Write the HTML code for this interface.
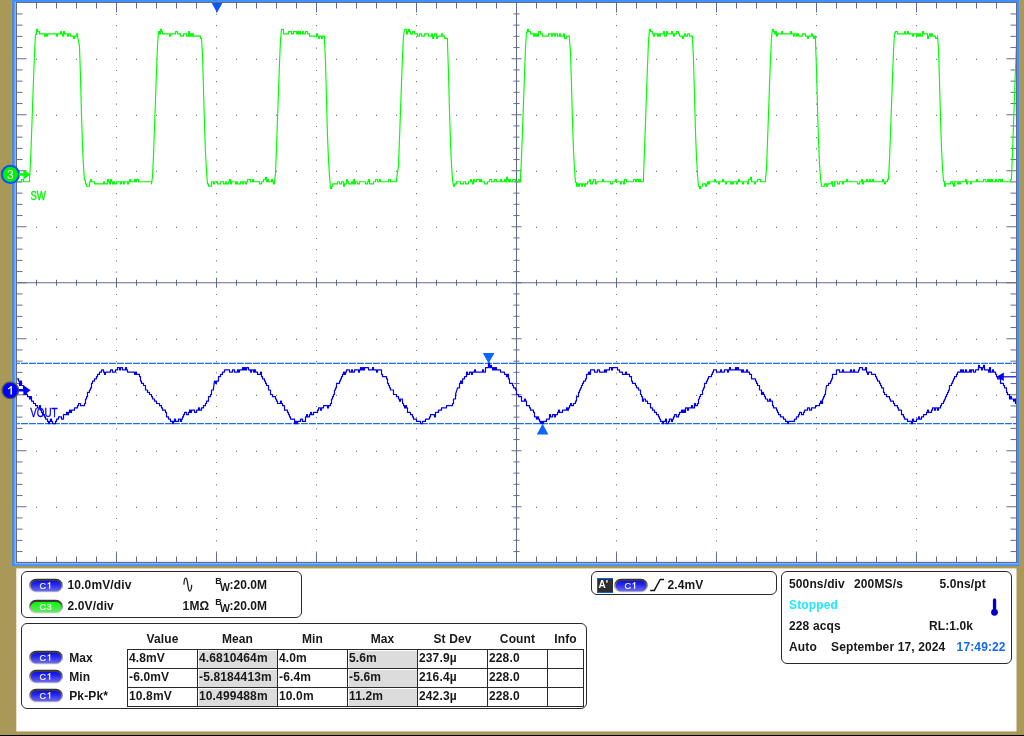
<!DOCTYPE html>
<html><head><meta charset="utf-8"><title>Oscilloscope</title>
<style>
html,body{margin:0;padding:0}
body{width:1024px;height:736px;overflow:hidden;position:relative;background:#aa9858;font-family:"Liberation Sans",sans-serif;}
#bottomline{position:absolute;left:0;top:735px;width:1024px;height:1px;background:#000;}
.box{position:absolute;border:1px solid #2a2a2a;border-radius:6px;box-sizing:border-box;background:#fff}
.t{position:absolute;font-weight:bold;font-size:12px;line-height:14px;color:#181818;white-space:nowrap;letter-spacing:0.13px}
.cell{position:absolute;box-sizing:border-box;border:1px solid #2a2a2a;height:20px}
.g{background:#dcdcdc;box-shadow:inset 1px 1px 0 #fff}
</style></head>
<body>
<svg width="1024" height="568" viewBox="0 0 1024 568" style="position:absolute;left:0;top:0;will-change:transform">
<defs><clipPath id="cp"><rect x="17" y="3" width="999" height="559"/></clipPath></defs>
<rect x="12" y="0" width="1007" height="566" fill="#4090ff"/>
<rect x="11" y="0" width="1" height="566" fill="#b09c52"/><rect x="12" y="2" width="1" height="562" fill="#5686bc"/><rect x="1019" y="0" width="1" height="566" fill="#b09a50"/>
<rect x="14.7" y="2" width="2" height="562" fill="#84b9fb"/>
<rect x="15" y="563" width="1003" height="1.4" fill="#78b0fa"/>
<rect x="17" y="3" width="999" height="559" fill="#ffffff"/>
<rect x="17" y="560.6" width="999" height="1.4" fill="#ececec"/>
<rect x="16.5" y="2.5" width="1000" height="560" fill="none" stroke="#636b8c" stroke-width="1"/>
<path d="M36.5 2.5v6M36.5 562.5v-6M36.5 279.75v6M56.5 2.5v6M56.5 562.5v-6M56.5 279.75v6M76.5 2.5v6M76.5 562.5v-6M76.5 279.75v6M96.5 2.5v6M96.5 562.5v-6M96.5 279.75v6M116.5 2.5v10M116.5 562.5v-10M116.5 277.75v10M136.5 2.5v6M136.5 562.5v-6M136.5 279.75v6M156.5 2.5v6M156.5 562.5v-6M156.5 279.75v6M176.5 2.5v6M176.5 562.5v-6M176.5 279.75v6M196.5 2.5v6M196.5 562.5v-6M196.5 279.75v6M216.5 2.5v10M216.5 562.5v-10M216.5 277.75v10M236.5 2.5v6M236.5 562.5v-6M236.5 279.75v6M256.5 2.5v6M256.5 562.5v-6M256.5 279.75v6M276.5 2.5v6M276.5 562.5v-6M276.5 279.75v6M296.5 2.5v6M296.5 562.5v-6M296.5 279.75v6M316.5 2.5v10M316.5 562.5v-10M316.5 277.75v10M336.5 2.5v6M336.5 562.5v-6M336.5 279.75v6M356.5 2.5v6M356.5 562.5v-6M356.5 279.75v6M376.5 2.5v6M376.5 562.5v-6M376.5 279.75v6M396.5 2.5v6M396.5 562.5v-6M396.5 279.75v6M416.5 2.5v10M416.5 562.5v-10M416.5 277.75v10M436.5 2.5v6M436.5 562.5v-6M436.5 279.75v6M456.5 2.5v6M456.5 562.5v-6M456.5 279.75v6M476.5 2.5v6M476.5 562.5v-6M476.5 279.75v6M496.5 2.5v6M496.5 562.5v-6M496.5 279.75v6M516.5 2.5v10M516.5 562.5v-10M516.5 277.75v10M536.5 2.5v6M536.5 562.5v-6M536.5 279.75v6M556.5 2.5v6M556.5 562.5v-6M556.5 279.75v6M576.5 2.5v6M576.5 562.5v-6M576.5 279.75v6M596.5 2.5v6M596.5 562.5v-6M596.5 279.75v6M616.5 2.5v10M616.5 562.5v-10M616.5 277.75v10M636.5 2.5v6M636.5 562.5v-6M636.5 279.75v6M656.5 2.5v6M656.5 562.5v-6M656.5 279.75v6M676.5 2.5v6M676.5 562.5v-6M676.5 279.75v6M696.5 2.5v6M696.5 562.5v-6M696.5 279.75v6M716.5 2.5v10M716.5 562.5v-10M716.5 277.75v10M736.5 2.5v6M736.5 562.5v-6M736.5 279.75v6M756.5 2.5v6M756.5 562.5v-6M756.5 279.75v6M776.5 2.5v6M776.5 562.5v-6M776.5 279.75v6M796.5 2.5v6M796.5 562.5v-6M796.5 279.75v6M816.5 2.5v10M816.5 562.5v-10M816.5 277.75v10M836.5 2.5v6M836.5 562.5v-6M836.5 279.75v6M856.5 2.5v6M856.5 562.5v-6M856.5 279.75v6M876.5 2.5v6M876.5 562.5v-6M876.5 279.75v6M896.5 2.5v6M896.5 562.5v-6M896.5 279.75v6M916.5 2.5v10M916.5 562.5v-10M916.5 277.75v10M936.5 2.5v6M936.5 562.5v-6M936.5 279.75v6M956.5 2.5v6M956.5 562.5v-6M956.5 279.75v6M976.5 2.5v6M976.5 562.5v-6M976.5 279.75v6M996.5 2.5v6M996.5 562.5v-6M996.5 279.75v6M16.5 13.95h6M1016.5 13.95h-6M513.5 13.95h6M16.5 25.15h6M1016.5 25.15h-6M513.5 25.15h6M16.5 36.35h6M1016.5 36.35h-6M513.5 36.35h6M16.5 47.55h6M1016.5 47.55h-6M513.5 47.55h6M16.5 58.75h10M1016.5 58.75h-10M511.5 58.75h10M16.5 69.95h6M1016.5 69.95h-6M513.5 69.95h6M16.5 81.15h6M1016.5 81.15h-6M513.5 81.15h6M16.5 92.35h6M1016.5 92.35h-6M513.5 92.35h6M16.5 103.55h6M1016.5 103.55h-6M513.5 103.55h6M16.5 114.75h10M1016.5 114.75h-10M511.5 114.75h10M16.5 125.95h6M1016.5 125.95h-6M513.5 125.95h6M16.5 137.15h6M1016.5 137.15h-6M513.5 137.15h6M16.5 148.35h6M1016.5 148.35h-6M513.5 148.35h6M16.5 159.55h6M1016.5 159.55h-6M513.5 159.55h6M16.5 170.75h10M1016.5 170.75h-10M511.5 170.75h10M16.5 181.95h6M1016.5 181.95h-6M513.5 181.95h6M16.5 193.15h6M1016.5 193.15h-6M513.5 193.15h6M16.5 204.35h6M1016.5 204.35h-6M513.5 204.35h6M16.5 215.55h6M1016.5 215.55h-6M513.5 215.55h6M16.5 226.75h10M1016.5 226.75h-10M511.5 226.75h10M16.5 237.95h6M1016.5 237.95h-6M513.5 237.95h6M16.5 249.15h6M1016.5 249.15h-6M513.5 249.15h6M16.5 260.35h6M1016.5 260.35h-6M513.5 260.35h6M16.5 271.55h6M1016.5 271.55h-6M513.5 271.55h6M16.5 282.75h10M1016.5 282.75h-10M511.5 282.75h10M16.5 293.95h6M1016.5 293.95h-6M513.5 293.95h6M16.5 305.15h6M1016.5 305.15h-6M513.5 305.15h6M16.5 316.35h6M1016.5 316.35h-6M513.5 316.35h6M16.5 327.55h6M1016.5 327.55h-6M513.5 327.55h6M16.5 338.75h10M1016.5 338.75h-10M511.5 338.75h10M16.5 349.95h6M1016.5 349.95h-6M513.5 349.95h6M16.5 361.15h6M1016.5 361.15h-6M513.5 361.15h6M16.5 372.35h6M1016.5 372.35h-6M513.5 372.35h6M16.5 383.55h6M1016.5 383.55h-6M513.5 383.55h6M16.5 394.75h10M1016.5 394.75h-10M511.5 394.75h10M16.5 405.95h6M1016.5 405.95h-6M513.5 405.95h6M16.5 417.15h6M1016.5 417.15h-6M513.5 417.15h6M16.5 428.35h6M1016.5 428.35h-6M513.5 428.35h6M16.5 439.55h6M1016.5 439.55h-6M513.5 439.55h6M16.5 450.75h10M1016.5 450.75h-10M511.5 450.75h10M16.5 461.95h6M1016.5 461.95h-6M513.5 461.95h6M16.5 473.15h6M1016.5 473.15h-6M513.5 473.15h6M16.5 484.35h6M1016.5 484.35h-6M513.5 484.35h6M16.5 495.55h6M1016.5 495.55h-6M513.5 495.55h6M16.5 506.75h10M1016.5 506.75h-10M511.5 506.75h10M16.5 517.95h6M1016.5 517.95h-6M513.5 517.95h6M16.5 529.15h6M1016.5 529.15h-6M513.5 529.15h6M16.5 540.35h6M1016.5 540.35h-6M513.5 540.35h6M16.5 551.55h6M1016.5 551.55h-6M513.5 551.55h6M16.5 282.75H1016.5M516.5 2.5V562.5" stroke="#636b8c" stroke-width="1" fill="none"/>
<path d="M116.0 14.50h1M116.0 25.70h1M116.0 36.90h1M116.0 48.10h1M116.0 59.30h1M116.0 70.50h1M116.0 81.70h1M116.0 92.90h1M116.0 104.10h1M116.0 115.30h1M116.0 126.50h1M116.0 137.70h1M116.0 148.90h1M116.0 160.10h1M116.0 171.30h1M116.0 182.50h1M116.0 193.70h1M116.0 204.90h1M116.0 216.10h1M116.0 227.30h1M116.0 238.50h1M116.0 249.70h1M116.0 260.90h1M116.0 272.10h1M116.0 283.30h1M116.0 294.50h1M116.0 305.70h1M116.0 316.90h1M116.0 328.10h1M116.0 339.30h1M116.0 350.50h1M116.0 361.70h1M116.0 372.90h1M116.0 384.10h1M116.0 395.30h1M116.0 406.50h1M116.0 417.70h1M116.0 428.90h1M116.0 440.10h1M116.0 451.30h1M116.0 462.50h1M116.0 473.70h1M116.0 484.90h1M116.0 496.10h1M116.0 507.30h1M116.0 518.50h1M116.0 529.70h1M116.0 540.90h1M116.0 552.10h1M216.0 14.50h1M216.0 25.70h1M216.0 36.90h1M216.0 48.10h1M216.0 59.30h1M216.0 70.50h1M216.0 81.70h1M216.0 92.90h1M216.0 104.10h1M216.0 115.30h1M216.0 126.50h1M216.0 137.70h1M216.0 148.90h1M216.0 160.10h1M216.0 171.30h1M216.0 182.50h1M216.0 193.70h1M216.0 204.90h1M216.0 216.10h1M216.0 227.30h1M216.0 238.50h1M216.0 249.70h1M216.0 260.90h1M216.0 272.10h1M216.0 283.30h1M216.0 294.50h1M216.0 305.70h1M216.0 316.90h1M216.0 328.10h1M216.0 339.30h1M216.0 350.50h1M216.0 361.70h1M216.0 372.90h1M216.0 384.10h1M216.0 395.30h1M216.0 406.50h1M216.0 417.70h1M216.0 428.90h1M216.0 440.10h1M216.0 451.30h1M216.0 462.50h1M216.0 473.70h1M216.0 484.90h1M216.0 496.10h1M216.0 507.30h1M216.0 518.50h1M216.0 529.70h1M216.0 540.90h1M216.0 552.10h1M316.0 14.50h1M316.0 25.70h1M316.0 36.90h1M316.0 48.10h1M316.0 59.30h1M316.0 70.50h1M316.0 81.70h1M316.0 92.90h1M316.0 104.10h1M316.0 115.30h1M316.0 126.50h1M316.0 137.70h1M316.0 148.90h1M316.0 160.10h1M316.0 171.30h1M316.0 182.50h1M316.0 193.70h1M316.0 204.90h1M316.0 216.10h1M316.0 227.30h1M316.0 238.50h1M316.0 249.70h1M316.0 260.90h1M316.0 272.10h1M316.0 283.30h1M316.0 294.50h1M316.0 305.70h1M316.0 316.90h1M316.0 328.10h1M316.0 339.30h1M316.0 350.50h1M316.0 361.70h1M316.0 372.90h1M316.0 384.10h1M316.0 395.30h1M316.0 406.50h1M316.0 417.70h1M316.0 428.90h1M316.0 440.10h1M316.0 451.30h1M316.0 462.50h1M316.0 473.70h1M316.0 484.90h1M316.0 496.10h1M316.0 507.30h1M316.0 518.50h1M316.0 529.70h1M316.0 540.90h1M316.0 552.10h1M416.0 14.50h1M416.0 25.70h1M416.0 36.90h1M416.0 48.10h1M416.0 59.30h1M416.0 70.50h1M416.0 81.70h1M416.0 92.90h1M416.0 104.10h1M416.0 115.30h1M416.0 126.50h1M416.0 137.70h1M416.0 148.90h1M416.0 160.10h1M416.0 171.30h1M416.0 182.50h1M416.0 193.70h1M416.0 204.90h1M416.0 216.10h1M416.0 227.30h1M416.0 238.50h1M416.0 249.70h1M416.0 260.90h1M416.0 272.10h1M416.0 283.30h1M416.0 294.50h1M416.0 305.70h1M416.0 316.90h1M416.0 328.10h1M416.0 339.30h1M416.0 350.50h1M416.0 361.70h1M416.0 372.90h1M416.0 384.10h1M416.0 395.30h1M416.0 406.50h1M416.0 417.70h1M416.0 428.90h1M416.0 440.10h1M416.0 451.30h1M416.0 462.50h1M416.0 473.70h1M416.0 484.90h1M416.0 496.10h1M416.0 507.30h1M416.0 518.50h1M416.0 529.70h1M416.0 540.90h1M416.0 552.10h1M616.0 14.50h1M616.0 25.70h1M616.0 36.90h1M616.0 48.10h1M616.0 59.30h1M616.0 70.50h1M616.0 81.70h1M616.0 92.90h1M616.0 104.10h1M616.0 115.30h1M616.0 126.50h1M616.0 137.70h1M616.0 148.90h1M616.0 160.10h1M616.0 171.30h1M616.0 182.50h1M616.0 193.70h1M616.0 204.90h1M616.0 216.10h1M616.0 227.30h1M616.0 238.50h1M616.0 249.70h1M616.0 260.90h1M616.0 272.10h1M616.0 283.30h1M616.0 294.50h1M616.0 305.70h1M616.0 316.90h1M616.0 328.10h1M616.0 339.30h1M616.0 350.50h1M616.0 361.70h1M616.0 372.90h1M616.0 384.10h1M616.0 395.30h1M616.0 406.50h1M616.0 417.70h1M616.0 428.90h1M616.0 440.10h1M616.0 451.30h1M616.0 462.50h1M616.0 473.70h1M616.0 484.90h1M616.0 496.10h1M616.0 507.30h1M616.0 518.50h1M616.0 529.70h1M616.0 540.90h1M616.0 552.10h1M716.0 14.50h1M716.0 25.70h1M716.0 36.90h1M716.0 48.10h1M716.0 59.30h1M716.0 70.50h1M716.0 81.70h1M716.0 92.90h1M716.0 104.10h1M716.0 115.30h1M716.0 126.50h1M716.0 137.70h1M716.0 148.90h1M716.0 160.10h1M716.0 171.30h1M716.0 182.50h1M716.0 193.70h1M716.0 204.90h1M716.0 216.10h1M716.0 227.30h1M716.0 238.50h1M716.0 249.70h1M716.0 260.90h1M716.0 272.10h1M716.0 283.30h1M716.0 294.50h1M716.0 305.70h1M716.0 316.90h1M716.0 328.10h1M716.0 339.30h1M716.0 350.50h1M716.0 361.70h1M716.0 372.90h1M716.0 384.10h1M716.0 395.30h1M716.0 406.50h1M716.0 417.70h1M716.0 428.90h1M716.0 440.10h1M716.0 451.30h1M716.0 462.50h1M716.0 473.70h1M716.0 484.90h1M716.0 496.10h1M716.0 507.30h1M716.0 518.50h1M716.0 529.70h1M716.0 540.90h1M716.0 552.10h1M816.0 14.50h1M816.0 25.70h1M816.0 36.90h1M816.0 48.10h1M816.0 59.30h1M816.0 70.50h1M816.0 81.70h1M816.0 92.90h1M816.0 104.10h1M816.0 115.30h1M816.0 126.50h1M816.0 137.70h1M816.0 148.90h1M816.0 160.10h1M816.0 171.30h1M816.0 182.50h1M816.0 193.70h1M816.0 204.90h1M816.0 216.10h1M816.0 227.30h1M816.0 238.50h1M816.0 249.70h1M816.0 260.90h1M816.0 272.10h1M816.0 283.30h1M816.0 294.50h1M816.0 305.70h1M816.0 316.90h1M816.0 328.10h1M816.0 339.30h1M816.0 350.50h1M816.0 361.70h1M816.0 372.90h1M816.0 384.10h1M816.0 395.30h1M816.0 406.50h1M816.0 417.70h1M816.0 428.90h1M816.0 440.10h1M816.0 451.30h1M816.0 462.50h1M816.0 473.70h1M816.0 484.90h1M816.0 496.10h1M816.0 507.30h1M816.0 518.50h1M816.0 529.70h1M816.0 540.90h1M816.0 552.10h1M916.0 14.50h1M916.0 25.70h1M916.0 36.90h1M916.0 48.10h1M916.0 59.30h1M916.0 70.50h1M916.0 81.70h1M916.0 92.90h1M916.0 104.10h1M916.0 115.30h1M916.0 126.50h1M916.0 137.70h1M916.0 148.90h1M916.0 160.10h1M916.0 171.30h1M916.0 182.50h1M916.0 193.70h1M916.0 204.90h1M916.0 216.10h1M916.0 227.30h1M916.0 238.50h1M916.0 249.70h1M916.0 260.90h1M916.0 272.10h1M916.0 283.30h1M916.0 294.50h1M916.0 305.70h1M916.0 316.90h1M916.0 328.10h1M916.0 339.30h1M916.0 350.50h1M916.0 361.70h1M916.0 372.90h1M916.0 384.10h1M916.0 395.30h1M916.0 406.50h1M916.0 417.70h1M916.0 428.90h1M916.0 440.10h1M916.0 451.30h1M916.0 462.50h1M916.0 473.70h1M916.0 484.90h1M916.0 496.10h1M916.0 507.30h1M916.0 518.50h1M916.0 529.70h1M916.0 540.90h1M916.0 552.10h1M36.0 59.30h1M56.0 59.30h1M76.0 59.30h1M96.0 59.30h1M116.0 59.30h1M136.0 59.30h1M156.0 59.30h1M176.0 59.30h1M196.0 59.30h1M216.0 59.30h1M236.0 59.30h1M256.0 59.30h1M276.0 59.30h1M296.0 59.30h1M316.0 59.30h1M336.0 59.30h1M356.0 59.30h1M376.0 59.30h1M396.0 59.30h1M416.0 59.30h1M436.0 59.30h1M456.0 59.30h1M476.0 59.30h1M496.0 59.30h1M516.0 59.30h1M536.0 59.30h1M556.0 59.30h1M576.0 59.30h1M596.0 59.30h1M616.0 59.30h1M636.0 59.30h1M656.0 59.30h1M676.0 59.30h1M696.0 59.30h1M716.0 59.30h1M736.0 59.30h1M756.0 59.30h1M776.0 59.30h1M796.0 59.30h1M816.0 59.30h1M836.0 59.30h1M856.0 59.30h1M876.0 59.30h1M896.0 59.30h1M916.0 59.30h1M936.0 59.30h1M956.0 59.30h1M976.0 59.30h1M996.0 59.30h1M36.0 115.30h1M56.0 115.30h1M76.0 115.30h1M96.0 115.30h1M116.0 115.30h1M136.0 115.30h1M156.0 115.30h1M176.0 115.30h1M196.0 115.30h1M216.0 115.30h1M236.0 115.30h1M256.0 115.30h1M276.0 115.30h1M296.0 115.30h1M316.0 115.30h1M336.0 115.30h1M356.0 115.30h1M376.0 115.30h1M396.0 115.30h1M416.0 115.30h1M436.0 115.30h1M456.0 115.30h1M476.0 115.30h1M496.0 115.30h1M516.0 115.30h1M536.0 115.30h1M556.0 115.30h1M576.0 115.30h1M596.0 115.30h1M616.0 115.30h1M636.0 115.30h1M656.0 115.30h1M676.0 115.30h1M696.0 115.30h1M716.0 115.30h1M736.0 115.30h1M756.0 115.30h1M776.0 115.30h1M796.0 115.30h1M816.0 115.30h1M836.0 115.30h1M856.0 115.30h1M876.0 115.30h1M896.0 115.30h1M916.0 115.30h1M936.0 115.30h1M956.0 115.30h1M976.0 115.30h1M996.0 115.30h1M36.0 171.30h1M56.0 171.30h1M76.0 171.30h1M96.0 171.30h1M116.0 171.30h1M136.0 171.30h1M156.0 171.30h1M176.0 171.30h1M196.0 171.30h1M216.0 171.30h1M236.0 171.30h1M256.0 171.30h1M276.0 171.30h1M296.0 171.30h1M316.0 171.30h1M336.0 171.30h1M356.0 171.30h1M376.0 171.30h1M396.0 171.30h1M416.0 171.30h1M436.0 171.30h1M456.0 171.30h1M476.0 171.30h1M496.0 171.30h1M516.0 171.30h1M536.0 171.30h1M556.0 171.30h1M576.0 171.30h1M596.0 171.30h1M616.0 171.30h1M636.0 171.30h1M656.0 171.30h1M676.0 171.30h1M696.0 171.30h1M716.0 171.30h1M736.0 171.30h1M756.0 171.30h1M776.0 171.30h1M796.0 171.30h1M816.0 171.30h1M836.0 171.30h1M856.0 171.30h1M876.0 171.30h1M896.0 171.30h1M916.0 171.30h1M936.0 171.30h1M956.0 171.30h1M976.0 171.30h1M996.0 171.30h1M36.0 227.30h1M56.0 227.30h1M76.0 227.30h1M96.0 227.30h1M116.0 227.30h1M136.0 227.30h1M156.0 227.30h1M176.0 227.30h1M196.0 227.30h1M216.0 227.30h1M236.0 227.30h1M256.0 227.30h1M276.0 227.30h1M296.0 227.30h1M316.0 227.30h1M336.0 227.30h1M356.0 227.30h1M376.0 227.30h1M396.0 227.30h1M416.0 227.30h1M436.0 227.30h1M456.0 227.30h1M476.0 227.30h1M496.0 227.30h1M516.0 227.30h1M536.0 227.30h1M556.0 227.30h1M576.0 227.30h1M596.0 227.30h1M616.0 227.30h1M636.0 227.30h1M656.0 227.30h1M676.0 227.30h1M696.0 227.30h1M716.0 227.30h1M736.0 227.30h1M756.0 227.30h1M776.0 227.30h1M796.0 227.30h1M816.0 227.30h1M836.0 227.30h1M856.0 227.30h1M876.0 227.30h1M896.0 227.30h1M916.0 227.30h1M936.0 227.30h1M956.0 227.30h1M976.0 227.30h1M996.0 227.30h1M36.0 339.30h1M56.0 339.30h1M76.0 339.30h1M96.0 339.30h1M116.0 339.30h1M136.0 339.30h1M156.0 339.30h1M176.0 339.30h1M196.0 339.30h1M216.0 339.30h1M236.0 339.30h1M256.0 339.30h1M276.0 339.30h1M296.0 339.30h1M316.0 339.30h1M336.0 339.30h1M356.0 339.30h1M376.0 339.30h1M396.0 339.30h1M416.0 339.30h1M436.0 339.30h1M456.0 339.30h1M476.0 339.30h1M496.0 339.30h1M516.0 339.30h1M536.0 339.30h1M556.0 339.30h1M576.0 339.30h1M596.0 339.30h1M616.0 339.30h1M636.0 339.30h1M656.0 339.30h1M676.0 339.30h1M696.0 339.30h1M716.0 339.30h1M736.0 339.30h1M756.0 339.30h1M776.0 339.30h1M796.0 339.30h1M816.0 339.30h1M836.0 339.30h1M856.0 339.30h1M876.0 339.30h1M896.0 339.30h1M916.0 339.30h1M936.0 339.30h1M956.0 339.30h1M976.0 339.30h1M996.0 339.30h1M36.0 395.30h1M56.0 395.30h1M76.0 395.30h1M96.0 395.30h1M116.0 395.30h1M136.0 395.30h1M156.0 395.30h1M176.0 395.30h1M196.0 395.30h1M216.0 395.30h1M236.0 395.30h1M256.0 395.30h1M276.0 395.30h1M296.0 395.30h1M316.0 395.30h1M336.0 395.30h1M356.0 395.30h1M376.0 395.30h1M396.0 395.30h1M416.0 395.30h1M436.0 395.30h1M456.0 395.30h1M476.0 395.30h1M496.0 395.30h1M516.0 395.30h1M536.0 395.30h1M556.0 395.30h1M576.0 395.30h1M596.0 395.30h1M616.0 395.30h1M636.0 395.30h1M656.0 395.30h1M676.0 395.30h1M696.0 395.30h1M716.0 395.30h1M736.0 395.30h1M756.0 395.30h1M776.0 395.30h1M796.0 395.30h1M816.0 395.30h1M836.0 395.30h1M856.0 395.30h1M876.0 395.30h1M896.0 395.30h1M916.0 395.30h1M936.0 395.30h1M956.0 395.30h1M976.0 395.30h1M996.0 395.30h1M36.0 451.30h1M56.0 451.30h1M76.0 451.30h1M96.0 451.30h1M116.0 451.30h1M136.0 451.30h1M156.0 451.30h1M176.0 451.30h1M196.0 451.30h1M216.0 451.30h1M236.0 451.30h1M256.0 451.30h1M276.0 451.30h1M296.0 451.30h1M316.0 451.30h1M336.0 451.30h1M356.0 451.30h1M376.0 451.30h1M396.0 451.30h1M416.0 451.30h1M436.0 451.30h1M456.0 451.30h1M476.0 451.30h1M496.0 451.30h1M516.0 451.30h1M536.0 451.30h1M556.0 451.30h1M576.0 451.30h1M596.0 451.30h1M616.0 451.30h1M636.0 451.30h1M656.0 451.30h1M676.0 451.30h1M696.0 451.30h1M716.0 451.30h1M736.0 451.30h1M756.0 451.30h1M776.0 451.30h1M796.0 451.30h1M816.0 451.30h1M836.0 451.30h1M856.0 451.30h1M876.0 451.30h1M896.0 451.30h1M916.0 451.30h1M936.0 451.30h1M956.0 451.30h1M976.0 451.30h1M996.0 451.30h1M36.0 507.30h1M56.0 507.30h1M76.0 507.30h1M96.0 507.30h1M116.0 507.30h1M136.0 507.30h1M156.0 507.30h1M176.0 507.30h1M196.0 507.30h1M216.0 507.30h1M236.0 507.30h1M256.0 507.30h1M276.0 507.30h1M296.0 507.30h1M316.0 507.30h1M336.0 507.30h1M356.0 507.30h1M376.0 507.30h1M396.0 507.30h1M416.0 507.30h1M436.0 507.30h1M456.0 507.30h1M476.0 507.30h1M496.0 507.30h1M516.0 507.30h1M536.0 507.30h1M556.0 507.30h1M576.0 507.30h1M596.0 507.30h1M616.0 507.30h1M636.0 507.30h1M656.0 507.30h1M676.0 507.30h1M696.0 507.30h1M716.0 507.30h1M736.0 507.30h1M756.0 507.30h1M776.0 507.30h1M796.0 507.30h1M816.0 507.30h1M836.0 507.30h1M856.0 507.30h1M876.0 507.30h1M896.0 507.30h1M916.0 507.30h1M936.0 507.30h1M956.0 507.30h1M976.0 507.30h1M996.0 507.30h1" stroke="#636b8c" stroke-width="1.2" fill="none" opacity="0.9"/>
<path d="M17.3 363.4H1016M17.3 423.6H1016" stroke="#166cf2" stroke-width="1.4" stroke-dasharray="6.9 1.1" stroke-dashoffset="4.3" fill="none"/>
<g clip-path="url(#cp)" fill="none" stroke-linejoin="round">
<path d="M17.0 181.7H21.5V179.5H23.5V181.7H29.5V178.5L30.5 163.0L31.5 136.0L32.5 108.0L33.5 80.0L34.5 53.5L35.5 34.4H36.5V29.4H37.5V31.6H39.5V33.9H44.5V36.1H45.5V33.9H46.5V36.1H47.5V33.9H56.5V36.1H57.5V33.9H60.5V31.6H61.5V33.9H62.5V36.1H63.5V31.6H64.5V33.9H67.5V36.1H68.5V33.9H70.5V36.1H73.5V38.3H74.5V36.1H76.5V33.9H77.5V36.1L79.5 46.3L80.5 77.2L81.5 114.4L82.5 145.6L83.5 166.4L84.5 180.2H85.5V183.9H86.5V186.2H89.5V181.7H90.5V179.5H91.5V181.7H94.5V183.9H103.5V181.7H104.5V183.9H107.5V179.5H108.5V181.7H109.5V183.9H110.5V179.5H111.5V181.7H112.5V183.9H113.5V181.7H114.5V183.9H116.5V181.7H120.5V183.9H121.5V181.7H123.5V183.9H124.5V181.7H127.5V183.9H128.5V181.7H129.5V179.5H130.5V181.7H134.5V179.5H135.5V181.7H136.5V179.5H138.5V181.7H151.5V183.9L152.5 177.0L153.5 155.2L154.5 127.6L155.5 99.6L156.5 71.6L157.5 46.0L158.5 31.6H159.5V33.9H160.5V29.4H161.5V31.6H162.5V33.9H169.5V36.1H170.5V33.9H175.5V31.6H177.5V33.9H180.5V36.1H183.5V33.9H186.5V36.1H188.5V31.6H189.5V36.1H190.5V33.9H191.5V36.1H192.5V33.9H193.5V36.1H200.5V38.3H201.5V38.5L202.5 54.1L203.5 88.6L204.5 125.2L205.5 152.8L206.5 171.2L207.5 183.9H208.5V186.2H211.5V181.7H213.5V183.9H214.5V181.7H217.5V183.9H220.5V181.7H223.5V183.9H225.5V181.7H226.5V183.9H228.5V181.7H229.5V179.5H230.5V183.9H231.5V181.7H235.5V183.9H236.5V181.7H237.5V183.9H240.5V181.7H242.5V183.9H243.5V181.7H245.5V183.9H246.5V181.7H247.5V179.5H250.5V181.7H252.5V179.5H253.5V181.7H259.5V183.9H261.5V181.7H263.5V179.5H265.5V177.2H266.5V181.7H267.5V179.5H268.5V181.7H271.5V179.5H272.5V181.7H273.5V183.9H274.5V181.7L275.5 173.4L276.5 147.2L277.5 119.2L278.5 91.2L279.5 63.5L280.5 39.7L281.5 29.4H283.5V33.9H288.5V31.6H291.5V33.9H293.5V31.6H296.5V33.9H297.5V31.6H298.5V33.9H299.5V31.6H300.5V33.9H302.5V31.6H303.5V33.9H305.5V31.6H307.5V33.9H309.5V36.1H316.5V33.9H317.5V36.1H318.5V38.3H319.5V36.1H321.5V38.3H322.5V36.1H324.5V40.0L325.5 62.0L326.5 100.0L327.5 136.0L328.5 160.0L329.5 176.0L330.5 188.4H331.5V186.2H332.5V183.9H337.5V181.7H339.5V183.9H341.5V181.7H343.5V186.2H344.5V183.9H346.5V179.5H347.5V181.7H348.5V183.9H351.5V181.7H352.5V183.9H353.5V179.5H354.5V183.9H355.5V181.7H357.5V183.9H359.5V181.7H365.5V183.9H367.5V181.7H368.5V179.5H369.5V183.9H373.5V181.7H375.5V179.5H377.5V181.7H379.5V179.5H380.5V181.7H388.5V179.5H390.5V181.7H396.5V179.5L398.5 165.6L399.5 138.8L400.5 110.8L401.5 82.8L402.5 56.0L403.5 35.8L404.5 29.4H406.5V33.9H407.5V31.6H408.5V29.4H409.5V31.6H410.5V33.9H412.5V31.6H414.5V33.9H417.5V36.1H419.5V33.9H421.5V36.1H424.5V33.9H428.5V36.1H431.5V33.9H432.5V38.3H433.5V36.1H434.5V33.9H436.5V38.3H437.5V36.1H441.5V33.9H442.5V36.1H444.5V38.3H447.5V43.6L448.5 73.4L449.5 110.8L450.5 143.2L451.5 164.8L452.5 179.1L453.5 186.2H454.5V183.9H456.5V181.7H460.5V183.9H463.5V181.7H465.5V183.9H468.5V181.7H470.5V179.5H471.5V181.7H472.5V183.9H473.5V179.5H474.5V181.7H476.5V179.5H479.5V181.7H480.5V179.5H481.5V181.7H484.5V183.9H487.5V181.7H489.5V179.5H491.5V181.7H494.5V179.5H496.5V181.7H500.5V179.5H501.5V181.7H504.5V179.5H505.5V181.7H506.5V177.2H507.5V179.5H508.5V181.7H509.5V179.5H510.5V181.7H512.5V179.5H515.5V181.7H518.5V179.5H519.5V181.7H520.5V177.5L521.5 157.8L522.5 130.4L523.5 102.4L524.5 74.4L525.5 48.5L526.5 31.8H527.5V29.4H528.5V31.6H530.5V33.9H533.5V36.1H534.5V33.9H535.5V36.1H536.5V33.9H537.5V36.1H538.5V31.6H540.5V33.9H542.5V36.1H548.5V33.9H551.5V36.1H552.5V33.9H554.5V36.1H555.5V33.9H557.5V36.1H559.5V33.9H560.5V36.1H563.5V33.9H564.5V38.3H566.5V36.1H569.5V40.6L570.5 51.5L571.5 84.8L572.5 121.6L573.5 150.4L574.5 169.6L575.5 182.3H576.5V186.2H577.5V183.9H578.5V186.2H579.5V183.9H581.5V186.2H582.5V183.9H584.5V186.2H585.5V183.9H587.5V181.7H589.5V179.5H590.5V183.9H592.5V181.7H593.5V179.5H595.5V183.9H596.5V181.7H602.5V179.5H603.5V181.7H610.5V183.9H612.5V181.7H615.5V179.5H616.5V181.7H620.5V183.9H621.5V181.7H623.5V183.9H624.5V179.5H626.5V181.7H633.5V179.5H635.5V181.7H636.5V179.5H638.5V181.7H639.5V179.5H640.5V181.7H643.5V176.0L644.5 150.0L645.5 122.0L646.5 94.0L647.5 66.0L648.5 41.0L649.5 29.4H650.5V31.6H652.5V33.9H653.5V36.1H654.5V33.9H657.5V36.1H658.5V33.9H659.5V36.1H660.5V33.9H663.5V31.6H664.5V36.1H666.5V31.6H667.5V33.9H671.5V31.6H672.5V33.9H673.5V36.1H674.5V33.9H676.5V31.6H678.5V33.9H679.5V36.1H682.5V38.3H683.5V36.1H684.5V33.9H685.5V36.1H687.5V33.9H689.5V36.1H692.5V39.5L693.5 59.4L694.5 96.2L695.5 132.4L696.5 157.6L697.5 174.4L698.5 186.2H699.5V188.4H700.5V186.2H702.5V183.9H705.5V186.2H706.5V183.9H707.5V181.7H708.5V183.9H709.5V181.7H714.5V179.5H715.5V181.7H718.5V183.9H719.5V181.7H722.5V179.5H723.5V181.7H725.5V183.9H726.5V181.7H730.5V183.9H731.5V181.7H732.5V183.9H733.5V181.7H736.5V183.9H737.5V181.7H738.5V179.5H739.5V181.7H742.5V183.9H743.5V181.7H747.5V183.9H748.5V179.5H750.5V177.2H751.5V181.7H754.5V183.9H755.5V181.7H757.5V179.5H760.5V181.7H765.5V179.5L766.5 168.2L767.5 141.6L768.5 113.6L769.5 85.6L770.5 58.5L771.5 37.1L772.5 29.4H773.5V31.6H774.5V33.9H775.5V31.6H776.5V36.1H777.5V33.9H781.5V31.6H782.5V33.9H790.5V31.6H791.5V33.9H793.5V36.1H794.5V33.9H796.5V36.1H797.5V33.9H798.5V36.1H802.5V33.9H805.5V36.1H807.5V38.3H808.5V36.1H811.5V33.9H812.5V36.1H813.5V38.3H814.5V36.1H815.5V41.0L816.5 69.6L817.5 107.2L818.5 140.8L819.5 163.2L820.5 178.1L821.5 186.2H824.5V183.9H826.5V186.2H827.5V183.9H831.5V181.7H832.5V186.2H834.5V181.7H837.5V183.9H839.5V181.7H842.5V183.9H843.5V181.7H846.5V179.5H847.5V181.7H857.5V183.9H859.5V181.7H861.5V179.5H862.5V183.9H863.5V181.7H866.5V179.5H867.5V181.7H869.5V179.5H870.5V181.7H872.5V179.5H873.5V181.7H882.5V179.5H883.5V181.7H884.5V183.9H885.5V181.7H887.5V179.5H888.5V178.0L889.5 160.4L890.5 133.2L891.5 105.2L892.5 77.2L893.5 51.0L894.5 33.1H895.5V31.6H897.5V33.9H904.5V31.6H905.5V33.9H907.5V31.6H908.5V33.9H912.5V36.1H913.5V33.9H916.5V36.1H917.5V33.9H918.5V36.1H919.5V33.9H920.5V36.1H922.5V31.6H923.5V33.9H927.5V38.3H928.5V36.1H929.5V33.9H930.5V36.1H931.5V33.9H932.5V36.1H935.5V38.3H937.5V36.1L938.5 48.9L939.5 81.0L940.5 118.0L941.5 148.0L942.5 168.0L943.5 181.3H944.5V186.2H945.5V183.9H950.5V181.7H952.5V183.9H953.5V186.2H954.5V181.7H957.5V183.9H958.5V181.7H959.5V183.9H960.5V181.7H965.5V179.5H966.5V183.9H967.5V181.7H970.5V183.9H971.5V181.7H976.5V179.5H977.5V181.7H983.5V179.5H985.5V181.7H987.5V179.5H988.5V181.7H989.5V179.5H990.5V181.7H991.5V179.5H992.5V181.7H995.5V179.5H996.5V181.7H998.5V179.5H1000.5V181.7H1001.5V179.5H1002.5V181.7H1010.5V179.5H1011.5V176.5L1012.5 152.6L1013.5 124.8L1014.5 96.8L1015.5 68.8L1016.5 43.5H1017.0" stroke="#00ff00" stroke-width="1.15"/>
<path d="M17.0 378.8H18.5V381.1H19.5V385.5H20.5V381.1H21.5V385.5H23.5V390.0H24.5V394.5H25.5V390.0H26.5V394.5H27.5V396.7H29.5V399.0H30.5V396.7H31.5V401.2H33.5V403.5H35.5V405.7H37.5V407.9H39.5V405.7H40.5V410.2H41.5V412.4H42.5V414.7H44.5V416.9H45.5V419.1H47.5V421.4H48.5V423.6H49.5V421.4H50.5V419.1H51.5V421.4H52.5V423.6H55.5V421.4H56.5V419.1H58.5V416.9H61.5V419.1H63.5V414.7H66.5V412.4H67.5V414.7H68.5V412.4H69.5V410.2H70.5V412.4H71.5V410.2H74.5V407.9H77.5V405.7H78.5V403.5H80.5V405.7H84.5V403.5H85.5V399.0H86.5V396.7H87.5V392.3H89.5V390.0H90.5V387.8H91.5V383.3H92.5V381.1H94.5V378.8H96.5V376.6H97.5V374.3H99.5V372.1H101.5V369.9H103.5V372.1H104.5V374.3H105.5V372.1H110.5V369.9H112.5V372.1H115.5V369.9H117.5V367.6H119.5V369.9H120.5V367.6H122.5V369.9H125.5V367.6H126.5V369.9H127.5V372.1H134.5V374.3H135.5V372.1H136.5V374.3H139.5V376.6H140.5V381.1H141.5V383.3H143.5V385.5H145.5V390.0H147.5V392.3H149.5V394.5H151.5V396.7H152.5V399.0H154.5V401.2H156.5V403.5H159.5V405.7H161.5V407.9H162.5V410.2H165.5V412.4H166.5V416.9H168.5V419.1H170.5V421.4H172.5V423.6H173.5V421.4H174.5V419.1H175.5V421.4H178.5V419.1H180.5V421.4H181.5V419.1H182.5V416.9H183.5V414.7H184.5V412.4H186.5V414.7H188.5V412.4H189.5V410.2H190.5V412.4H191.5V410.2H194.5V412.4H196.5V410.2H198.5V407.9H199.5V410.2H201.5V407.9H203.5V405.7H205.5V403.5H206.5V401.2H208.5V396.7H210.5V394.5H211.5V390.0H213.5V387.8L214.5 381.1H215.5V383.3H216.5V381.1H218.5V376.6H220.5V374.3H222.5V372.1H224.5V369.9H229.5V372.1H232.5V369.9H234.5V372.1H237.5V369.9H238.5V372.1H239.5V369.9H242.5V367.6H243.5V369.9H244.5V367.6H245.5V369.9H246.5V367.6H248.5V369.9H250.5V372.1H251.5V369.9H253.5V372.1H254.5V369.9H255.5V372.1H257.5V374.3H260.5V372.1H261.5V376.6H262.5V378.8H264.5V381.1H265.5V383.3H266.5V385.5H268.5V390.0H270.5V394.5H272.5V396.7H275.5V399.0H276.5V401.2H277.5V403.5H280.5V401.2H281.5V403.5H282.5V405.7H284.5V410.2H287.5V412.4H288.5V414.7H289.5V416.9H290.5V419.1H294.5V423.6H295.5V421.4H296.5V423.6H297.5V421.4H300.5V419.1H302.5V421.4H305.5V416.9H306.5V414.7H307.5V416.9H309.5V414.7H310.5V412.4H311.5V414.7H313.5V412.4H317.5V410.2H318.5V407.9H320.5V410.2H321.5V407.9H323.5V405.7H327.5V407.9H328.5V405.7H330.5V403.5H331.5V399.0H332.5V396.7H333.5V394.5H334.5V390.0H335.5V387.8H336.5V383.3H339.5V381.1H340.5V378.8H341.5V376.6H342.5V374.3H343.5V372.1H344.5V374.3H345.5V372.1H346.5V369.9H349.5V372.1H351.5V369.9H352.5V372.1H354.5V369.9H358.5V372.1H359.5V369.9H360.5V367.6H361.5V369.9H362.5V367.6H363.5V369.9H364.5V367.6H368.5V369.9H372.5V367.6H373.5V369.9H376.5V372.1H377.5V369.9H381.5V374.3H382.5V376.6H386.5V378.8H387.5V383.3H388.5V385.5H389.5V387.8H390.5V390.0H393.5V394.5H396.5V396.7H398.5V399.0H399.5V401.2H400.5V399.0H402.5V403.5H403.5V405.7H404.5V407.9H405.5V405.7H406.5V407.9H407.5V412.4H410.5V414.7H412.5V416.9H413.5V419.1H416.5V421.4H420.5V423.6H422.5V421.4H425.5V419.1H429.5V416.9H430.5V414.7H434.5V416.9H435.5V412.4H438.5V410.2H441.5V407.9H446.5V405.7H452.5V403.5H453.5V399.0H455.5V394.5L457.5 387.8H459.5V383.3H460.5V381.1H461.5V383.3H462.5V378.8H464.5V376.6H466.5V372.1H467.5V374.3H469.5V372.1H471.5V374.3H472.5V372.1H474.5V369.9H475.5V372.1H482.5V369.9H483.5V372.1H485.5V367.6H488.5V363.1H489.5V367.6H490.5V365.4H491.5V367.6H492.5V369.9H493.5V367.6H494.5V369.9H495.5V367.6H496.5V369.9H500.5V372.1H504.5V374.3H506.5V376.6H507.5V374.3H508.5V378.8H509.5V383.3H512.5V385.5H513.5V387.8H515.5V390.0H516.5V394.5H518.5V396.7H521.5V401.2H524.5V399.0H525.5V401.2H526.5V405.7H529.5V407.9H530.5V410.2H533.5V412.4H534.5V416.9H536.5V419.1H537.5V416.9H538.5V419.1H539.5V421.4H540.5V423.6H541.5V421.4H542.5V423.6H543.5V421.4H546.5V419.1H549.5V414.7H550.5V416.9H552.5V414.7H554.5V416.9H555.5V414.7H557.5V412.4H558.5V410.2H559.5V412.4H562.5V410.2H566.5V407.9H567.5V410.2H568.5V407.9H569.5V405.7H570.5V403.5H571.5V405.7H573.5V403.5H575.5V401.2H576.5V396.7H578.5V392.3H579.5V390.0H580.5V387.8H581.5V385.5H582.5V383.3H583.5V381.1H585.5V378.8H586.5V374.3H588.5V372.1H589.5V374.3H590.5V369.9H594.5V372.1H597.5V369.9H599.5V372.1H604.5V369.9H605.5V372.1H606.5V369.9H609.5V367.6H611.5V369.9H612.5V367.6H617.5V369.9H619.5V372.1H622.5V374.3H625.5V372.1H626.5V374.3H629.5V376.6H631.5V381.1H632.5V383.3H635.5V385.5H636.5V387.8H638.5V390.0H640.5V394.5H641.5V396.7H642.5V401.2H643.5V399.0H645.5V401.2H647.5V403.5H650.5V407.9H652.5V410.2H654.5V412.4H656.5V414.7H658.5V416.9H659.5V419.1H660.5V421.4H662.5V423.6H663.5V421.4H665.5V419.1H666.5V423.6H668.5V421.4H669.5V419.1H671.5V421.4H672.5V419.1H673.5V416.9H674.5V414.7H676.5V416.9H678.5V414.7H679.5V412.4H681.5V410.2H682.5V412.4H683.5V410.2H684.5V412.4H685.5V407.9H687.5V410.2H688.5V407.9H691.5V405.7H692.5V407.9H694.5V403.5H695.5V405.7H697.5V403.5H698.5V399.0H699.5V396.7H700.5V394.5H702.5V390.0H703.5V387.8H704.5V383.3H706.5V381.1H707.5V378.8H708.5V376.6H711.5V374.3H712.5V372.1H713.5V369.9H716.5V372.1H720.5V369.9H721.5V372.1H724.5V369.9H727.5V372.1H728.5V369.9H729.5V367.6H730.5V369.9H735.5V367.6H736.5V369.9H737.5V367.6H738.5V369.9H741.5V372.1H742.5V369.9H743.5V372.1H746.5V369.9H747.5V372.1H749.5V374.3H751.5V378.8H755.5V381.1H756.5V383.3H757.5V385.5H759.5V390.0H761.5V394.5H762.5V392.3H763.5V394.5H764.5V396.7H765.5V399.0H767.5V401.2H769.5V399.0H770.5V401.2H772.5V405.7H773.5V407.9H776.5V410.2H777.5V412.4H778.5V414.7H780.5V416.9H783.5V419.1H785.5V421.4H787.5V423.6H788.5V421.4H794.5V419.1H796.5V416.9H798.5V414.7H799.5V412.4H801.5V414.7H803.5V412.4H804.5V410.2H807.5V407.9H809.5V410.2H811.5V407.9H815.5V405.7H819.5V403.5H820.5V401.2H821.5V403.5H822.5V399.0H823.5V396.7H824.5V394.5H825.5V392.3L826.5 385.5H828.5V383.3H830.5V381.1H831.5V378.8H832.5V374.3H836.5V369.9H839.5V372.1H842.5V369.9H843.5V372.1H850.5V369.9H851.5V372.1H853.5V369.9H854.5V372.1H858.5V369.9H859.5V367.6H862.5V369.9H865.5V367.6H866.5V372.1H867.5V374.3H868.5V372.1H871.5V374.3H875.5V376.6H876.5V378.8H877.5V381.1H879.5V383.3H880.5V385.5H881.5V387.8H883.5V392.3H884.5V394.5H886.5V396.7H889.5V399.0H890.5V401.2H893.5V403.5H894.5V405.7H897.5V407.9H898.5V410.2H901.5V414.7H903.5V416.9H904.5V419.1H907.5V421.4H911.5V423.6H912.5V419.1H913.5V421.4H916.5V419.1H918.5V416.9H919.5V419.1H921.5V416.9H923.5V414.7H926.5V412.4H927.5V410.2H928.5V412.4H931.5V410.2H932.5V407.9H934.5V410.2H935.5V407.9H937.5V410.2H938.5V407.9H940.5V405.7H941.5V403.5H943.5V401.2H944.5V399.0H945.5V396.7H946.5V394.5H947.5V392.3H948.5V390.0H949.5V385.5H951.5V383.3H952.5V381.1H953.5V378.8H954.5V376.6H956.5V374.3H957.5V372.1H960.5V369.9H961.5V372.1H962.5V369.9H963.5V372.1H965.5V369.9H966.5V372.1H969.5V369.9H970.5V372.1H971.5V369.9H973.5V372.1H975.5V369.9H978.5V365.4H979.5V367.6H981.5V369.9H982.5V367.6H983.5V365.4H984.5V369.9H988.5V372.1H989.5V367.6H990.5V372.1H992.5V369.9H993.5V372.1H995.5V374.3H996.5V376.6H997.5V378.8H1000.5V383.3H1003.5V385.5H1004.5V387.8H1006.5V392.3H1007.5V394.5H1009.5V399.0H1010.5V396.7H1011.5V399.0H1013.5V401.2H1014.5V399.0H1015.5V403.5H1017.0" stroke="#0000f0" stroke-width="1.2"/>
</g>
<path d="M211.8 3H222.4L217 12.8Z" fill="#0a55ff"/>
<path d="M482.8 353H494.4L488.6 363.4Z" fill="#0a64ff"/>
<path d="M536.8 434.6H548.4L542.6 423.8Z" fill="#0a64ff"/>
<path d="M996.6 376.8L1003.8 372.6V381Z" fill="#0000f0"/><path d="M1003 376.8H1016" stroke="#0000f0" stroke-width="1.2"/>
<circle cx="10.4" cy="174.4" r="8.6" fill="#00f000" stroke="#0a50ff" stroke-width="2"/>
<path d="M18.6 173.2H23.4V169.4L30.6 174.5L23.4 179.6V175.8H18.6Z" fill="#00ff00"/>
<text x="10.4" y="178.6" font-family="Liberation Sans, sans-serif" font-size="12" fill="#fff" text-anchor="middle">3</text>
<text x="30.4" y="199.8" font-family="Liberation Sans, sans-serif" font-size="12" fill="#00f400" stroke="#00f400" stroke-width="0.3" textLength="15.6" lengthAdjust="spacingAndGlyphs">SW</text>
<circle cx="10.3" cy="390.3" r="8.3" fill="#0000ff" stroke="#5c5a4c" stroke-width="1.4"/>
<path d="M18.6 389.1H23.4V385.2L30.6 390.3L23.4 395.4V391.5H18.6Z" fill="#0000ff"/>
<path d="M11.9 386V394.4H10.5V388.1C9.9 388.7 9 389.2 8 389.6V388.3C9.3 387.8 10.3 387 10.8 386Z" fill="#fff"/>
<text x="30.2" y="416.8" font-family="Liberation Sans, sans-serif" font-size="12" fill="#0000f4" stroke="#0000f4" stroke-width="0.3" textLength="27.4" lengthAdjust="spacingAndGlyphs">VOUT</text>
</svg>
<svg style="position:absolute;left:0;top:560px" width="1024" height="176" viewBox="0 0 1024 176"><rect x="16.3" y="8.4" width="1000.2" height="163" fill="#fff"/></svg><div id="ui" style="position:absolute;left:0;top:0;width:1024px;height:736px;will-change:transform">
<div class="box" style="left:21px;top:571px;width:281px;height:47px"></div>
<svg width="0" height="0" style="position:absolute"><defs>
<linearGradient id="rg" x1="0" y1="0" x2="0" y2="1"><stop offset="0" stop-color="#2c2c2c"/><stop offset="0.3" stop-color="#55554f"/><stop offset="0.62" stop-color="#a4a49e"/><stop offset="1" stop-color="#e2e2dc"/></linearGradient>
<linearGradient id="bg1" x1="0" y1="0" x2="0" y2="1"><stop offset="0" stop-color="#0a0afa"/><stop offset="0.35" stop-color="#2626f2"/><stop offset="1" stop-color="#7272e2"/></linearGradient>
<linearGradient id="bg3" x1="0" y1="0" x2="0" y2="1"><stop offset="0" stop-color="#0afa0a"/><stop offset="0.35" stop-color="#26f226"/><stop offset="1" stop-color="#72e272"/></linearGradient>
<filter id="bl" x="-10%" y="-20%" width="120%" height="140%"><feGaussianBlur stdDeviation="0.35"/></filter>
<g id="b1"><rect x="1.1" y="0.8" width="33.8" height="13.7" rx="6.85" fill="url(#rg)" filter="url(#bl)"/><rect x="2.9" y="2.9" width="30.5" height="10.7" rx="5.35" fill="url(#bg1)"/><text x="11.6" y="10.7" font-family="Liberation Sans, sans-serif" font-size="9" fill="#f4f4ff" stroke="#f4f4ff" stroke-width="0.2">C</text><path transform="translate(18.8 10.7)" d="M3.45 0H2.2V-5C1.8 -4.6 1.3 -4.3 0.75 -4.05V-5.15C1.7 -5.55 2.4 -6.05 2.75 -6.6H3.45Z" fill="#f4f4ff"/></g>
<g id="b3"><rect x="1.1" y="0.8" width="33.8" height="13.7" rx="6.85" fill="url(#rg)" filter="url(#bl)"/><rect x="2.9" y="2.9" width="30.5" height="10.7" rx="5.35" fill="url(#bg3)"/><text x="11.6" y="10.7" font-family="Liberation Sans, sans-serif" font-size="9" fill="#f4fff4" stroke="#f4fff4" stroke-width="0.2" letter-spacing="0.7">C3</text></g>
</defs></svg>
<svg style="position:absolute;left:28.2px;top:577.7px" width="36" height="16" viewBox="0 0 36 16"><use href="#b1"/></svg>
<svg style="position:absolute;left:28.2px;top:598.6px" width="36" height="16" viewBox="0 0 36 16"><use href="#b3"/></svg>
<div class="t" style="left:67.5px;top:577.5px;">10.0mV/div</div>
<div class="t" style="left:67.5px;top:598.5px;">2.0V/div</div>
<svg style="position:absolute;left:182px;top:576px" width="12" height="17" viewBox="0 0 12 17"><path d="M1.9 8.6C2.1 4.2 2.6 2.2 3.7 2.2C5.2 2.2 5.3 6 5.8 8.6C6.3 11.4 6.5 15 7.9 15C9 15 9.5 12.8 9.7 8.8" fill="none" stroke="#1c1c1c" stroke-width="1.25"/></svg>
<div class="t" style="left:182.6px;top:598.5px;">1M&#937;</div>
<div class="t" style="left:215.3px;top:573.9px;font-size:9px">B</div>
<div class="t" style="left:220.0px;top:579.9px;font-size:10.5px">W</div>
<div class="t" style="left:229.6px;top:577.5px;letter-spacing:0">:20.0M</div>
<div class="t" style="left:215.3px;top:594.9px;font-size:9px">B</div>
<div class="t" style="left:220.0px;top:600.9px;font-size:10.5px">W</div>
<div class="t" style="left:229.6px;top:598.5px;letter-spacing:0">:20.0M</div>
<div class="box" style="left:591px;top:571px;width:186px;height:24px"></div>
<div style="position:absolute;left:597px;top:578px;width:16px;height:15px;box-sizing:border-box;background:#2e2e2e;border:1px solid #0a5cff;border-right:none"></div>
<div class="t" style="left:598.6px;top:578.3px;color:#fff;font-size:10px;letter-spacing:0">A'</div>
<svg style="position:absolute;left:613.3px;top:578.1px" width="36" height="16" viewBox="0 0 36 16"><use href="#b1"/></svg>
<svg style="position:absolute;left:648px;top:576px" width="18" height="17" viewBox="0 0 18 17"><path d="M2.2 14.6H6.2L12.2 3.5H16" fill="none" stroke="#111" stroke-width="1.5" stroke-linejoin="round"/></svg>
<div class="t" style="left:667.4px;top:577.5px;">2.4mV</div>
<div class="box" style="left:781px;top:571px;width:231px;height:93px"></div>
<div class="t" style="left:789px;top:577.1px;">500ns/div</div>
<div class="t" style="left:854.0px;top:577.1px;">200MS/s</div>
<div class="t" style="left:939.4px;top:577.1px;">5.0ns/pt</div>
<div class="t" style="left:789px;top:598.1px;color:#1ee8ff">Stopped</div>
<div class="t" style="left:789px;top:619.1px;">228 acqs</div>
<div class="t" style="left:928.9px;top:619.1px;">RL:1.0k</div>
<div class="t" style="left:789px;top:640.1px;">Auto</div>
<div class="t" style="left:831px;top:640.1px;">September 17, 2024</div>
<div class="t" style="left:956.6px;top:640.1px;color:#1468f0">17:49:22</div>
<svg style="position:absolute;left:988px;top:596px" width="14" height="22" viewBox="0 0 14 22"><rect x="4.9" y="2.6" width="3.3" height="12" rx="1.4" fill="#0000c8"/><circle cx="6.5" cy="16.3" r="3.4" fill="#0000c8"/></svg>
<div class="box" style="left:21px;top:623px;width:566px;height:86px"></div>
<div class="t" style="left:122.5px;width:80px;text-align:center;top:631.5px">Value</div>
<div class="t" style="left:197.5px;width:80px;text-align:center;top:631.5px">Mean</div>
<div class="t" style="left:272.5px;width:80px;text-align:center;top:631.5px">Min</div>
<div class="t" style="left:342.5px;width:80px;text-align:center;top:631.5px">Max</div>
<div class="t" style="left:412.5px;width:80px;text-align:center;top:631.5px">St Dev</div>
<div class="t" style="left:477.5px;width:80px;text-align:center;top:631.5px">Count</div>
<div class="t" style="left:525.5px;width:80px;text-align:center;top:631.5px">Info</div>
<svg style="position:absolute;left:28.0px;top:650.0px" width="36" height="16" viewBox="0 0 36 16"><use href="#b1"/></svg>
<div class="t" style="left:69.2px;top:651.1px;">Max</div>
<div class="cell" style="left:127px;top:649px;width:71px"></div>
<div class="t" style="left:129.0px;top:651.1px;">4.8mV</div>
<div class="cell g" style="left:197px;top:649px;width:81px"></div>
<div class="t" style="left:199.0px;top:651.1px;">4.6810464m</div>
<div class="cell" style="left:277px;top:649px;width:71px"></div>
<div class="t" style="left:279.0px;top:651.1px;">4.0m</div>
<div class="cell g" style="left:347px;top:649px;width:71px"></div>
<div class="t" style="left:349.0px;top:651.1px;">5.6m</div>
<div class="cell" style="left:417px;top:649px;width:71px"></div>
<div class="t" style="left:419.0px;top:651.1px;">237.9&#181;</div>
<div class="cell" style="left:487px;top:649px;width:61px"></div>
<div class="t" style="left:489.0px;top:651.1px;">228.0</div>
<div class="cell" style="left:547px;top:649px;width:37px"></div>
<svg style="position:absolute;left:28.0px;top:669.0px" width="36" height="16" viewBox="0 0 36 16"><use href="#b1"/></svg>
<div class="t" style="left:69.2px;top:670.1px;">Min</div>
<div class="cell" style="left:127px;top:668px;width:71px"></div>
<div class="t" style="left:129.0px;top:670.1px;">-6.0mV</div>
<div class="cell g" style="left:197px;top:668px;width:81px"></div>
<div class="t" style="left:199.0px;top:670.1px;">-5.8184413m</div>
<div class="cell" style="left:277px;top:668px;width:71px"></div>
<div class="t" style="left:279.0px;top:670.1px;">-6.4m</div>
<div class="cell g" style="left:347px;top:668px;width:71px"></div>
<div class="t" style="left:349.0px;top:670.1px;">-5.6m</div>
<div class="cell" style="left:417px;top:668px;width:71px"></div>
<div class="t" style="left:419.0px;top:670.1px;">216.4&#181;</div>
<div class="cell" style="left:487px;top:668px;width:61px"></div>
<div class="t" style="left:489.0px;top:670.1px;">228.0</div>
<div class="cell" style="left:547px;top:668px;width:37px"></div>
<svg style="position:absolute;left:28.0px;top:688.0px" width="36" height="16" viewBox="0 0 36 16"><use href="#b1"/></svg>
<div class="t" style="left:69.2px;top:689.1px;">Pk-Pk*</div>
<div class="cell" style="left:127px;top:687px;width:71px"></div>
<div class="t" style="left:129.0px;top:689.1px;">10.8mV</div>
<div class="cell g" style="left:197px;top:687px;width:81px"></div>
<div class="t" style="left:199.0px;top:689.1px;">10.499488m</div>
<div class="cell" style="left:277px;top:687px;width:71px"></div>
<div class="t" style="left:279.0px;top:689.1px;">10.0m</div>
<div class="cell g" style="left:347px;top:687px;width:71px"></div>
<div class="t" style="left:349.0px;top:689.1px;">11.2m</div>
<div class="cell" style="left:417px;top:687px;width:71px"></div>
<div class="t" style="left:419.0px;top:689.1px;">242.3&#181;</div>
<div class="cell" style="left:487px;top:687px;width:61px"></div>
<div class="t" style="left:489.0px;top:689.1px;">228.0</div>
<div class="cell" style="left:547px;top:687px;width:37px"></div>
</div><div id="bottomline"></div>
</body></html>
